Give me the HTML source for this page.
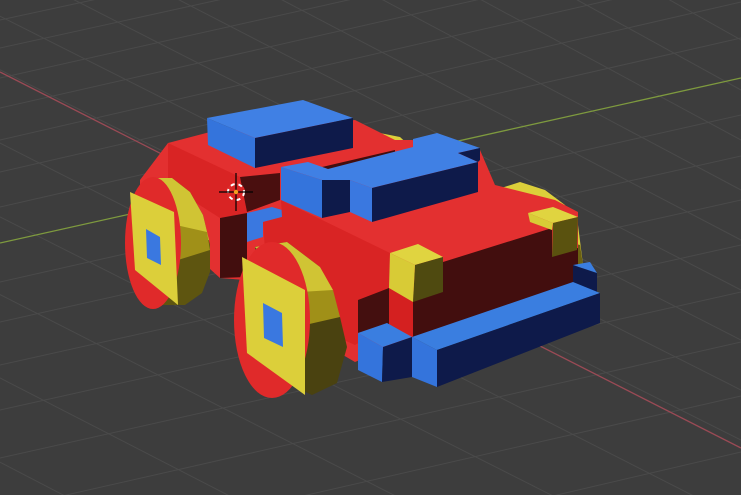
<!DOCTYPE html>
<html><head><meta charset="utf-8"><style>
html,body{margin:0;padding:0;background:#3d3d3d;width:741px;height:495px;overflow:hidden}
svg{display:block;overflow:hidden}
</style></head><body>
<svg width="741" height="495" viewBox="0 0 741 495" xmlns="http://www.w3.org/2000/svg">
<rect width="741" height="495" fill="#3d3d3d"/>
<g stroke="#4a4a4a" stroke-width="1" fill="none">
<line x1="0" y1="20" x2="741" y2="-140"/>
<line x1="0" y1="48" x2="741" y2="-115"/>
<line x1="0" y1="78" x2="741" y2="-88"/>
<line x1="0" y1="108" x2="741" y2="-60"/>
<line x1="0" y1="140" x2="741" y2="-30"/>
<line x1="0" y1="172" x2="741" y2="2"/>
<line x1="0" y1="207" x2="741" y2="38"/>
<line x1="0" y1="282" x2="741" y2="115"/>
<line x1="0" y1="322" x2="741" y2="156"/>
<line x1="0" y1="365" x2="741" y2="200"/>
<line x1="0" y1="410" x2="741" y2="245"/>
<line x1="0" y1="458" x2="741" y2="292"/>
<line x1="0" y1="510" x2="741" y2="342"/>
<line x1="0" y1="565" x2="741" y2="396"/>
<line x1="0" y1="625" x2="741" y2="452"/>
<line x1="0" y1="690" x2="741" y2="512"/>
<line x1="-300" y1="-80" x2="741" y2="440"/>
<line x1="-250" y1="-110" x2="741" y2="390"/>
<line x1="-200" y1="-140" x2="741" y2="340"/>
<line x1="-150" y1="-170" x2="741" y2="290"/>
<line x1="-100" y1="-200" x2="741" y2="240"/>
<line x1="-50" y1="-230" x2="741" y2="190"/>
<line x1="0" y1="-260" x2="741" y2="140"/>
<line x1="50" y1="-290" x2="741" y2="90"/>
<line x1="100" y1="-320" x2="741" y2="40"/>
<line x1="-360" y1="-40" x2="741" y2="520"/>
<line x1="-430" y1="0" x2="680" y2="560"/>
<line x1="-500" y1="40" x2="600" y2="600"/>
<line x1="-580" y1="80" x2="510" y2="640"/>
<line x1="-660" y1="120" x2="420" y2="680"/>
<line x1="-750" y1="160" x2="320" y2="720"/>
<line x1="-850" y1="200" x2="200" y2="760"/>
</g>
<line x1="0" y1="72" x2="741" y2="448" stroke="#9a4a55" stroke-width="1.3"/>
<line x1="0" y1="243" x2="741" y2="78" stroke="#7e9a3e" stroke-width="1.3"/>

<polygon points="495,190 520,182 545,190 565,205 578,225 583,265 578,292 560,295 540,240" fill="#dccf3a"/>
<polygon points="560,240 580,245 583,265 578,292 560,295" fill="#6a6012"/>
<polygon points="362,137 380,133 400,137 412,148 397,153 370,150" fill="#dccf3a"/>

<polygon points="140,180 168,143 210,132 355,120 395,140 412,140 480,150 495,185 555,200 578,212 578,285 412,338 355,362 300,330 245,280 220,278 200,260 140,230" fill="#e33030"/>
<polygon points="168,143 240,177 247,213 220,218 168,185" fill="#d92424"/>
<polygon points="240,177 280,173 280,200 247,212" fill="#4a0f0f"/>
<polygon points="220,218 247,213 247,277 220,278" fill="#420e0e"/>
<polygon points="322,167 395,150 395,155 330,170" fill="#420e0e"/>
<polygon points="247,213 272,207 282,210 282,217 263,222 263,237 253,240 247,242" fill="#3a78e0"/>
<polygon points="281,200 390,253 389,325 355,345 300,320 265,250 263,222 282,217" fill="#d92424"/>
<polygon points="412,295 443,262 552,228 552,255 578,248 578,285 412,338" fill="#420e0e"/>
<polygon points="389,288 413,302 413,337 389,325" fill="#d42020"/>
<polygon points="358,300 389,288 389,325 358,333" fill="#440f0f"/>
<polygon points="390,253 418,244 443,257 415,265" fill="#e0d440"/>
<polygon points="415,265 443,257 443,292 413,302" fill="#4f4a10"/>
<polygon points="390,253 415,265 413,302 389,288" fill="#d8cb36"/>
<polygon points="528,213 553,207 578,217 553,223" fill="#e0d440"/>
<polygon points="553,223 578,217 577,250 552,257" fill="#5a520f"/>
<polygon points="528,213 553,223 552,230 530,222" fill="#d8cb36"/>

<polygon points="573,265 597,273 597,293 573,282" fill="#0e1a4a"/>
<polygon points="573,265 590,262 597,273" fill="#3a7ee0"/>
<polygon points="412,337 573,282 600,293 437,350" fill="#3a7ee0"/>
<polygon points="437,350 600,293 600,323 437,387" fill="#0e1a4a"/>
<polygon points="412,337 437,350 437,387 412,377" fill="#3474dc"/>
<polygon points="358,333 387,323 412,337 383,347" fill="#3a7ee0"/>
<polygon points="358,333 383,347 382,382 358,370" fill="#3474dc"/>
<polygon points="383,347 412,337 412,377 382,382" fill="#0e1a4a"/>

<polygon points="207,118 303,100 353,118 255,138" fill="#4080e4"/>
<polygon points="255,138 353,118 353,148 255,168" fill="#0e1a4a"/>
<polygon points="207,118 255,138 255,168 208,145" fill="#3474dc"/>

<polygon points="281,167 308,162 328,169 413,147 413,139 437,133 480,148 458,153 478,162 372,188 350,180 322,180" fill="#4080e4"/>
<polygon points="458,153 480,148 480,160 478,162" fill="#0e1a4a"/>
<polygon points="372,188 478,162 478,192 372,222" fill="#0e1a4a"/>
<polygon points="350,180 372,188 372,222 350,212" fill="#3a78e0"/>
<polygon points="281,167 322,180 322,218 281,200" fill="#3474dc"/>
<polygon points="322,180 350,180 350,212 322,218" fill="#0e1a4a"/>

<polygon points="148,178 172,178 190,192 203,215 210,245 210,272 202,293 185,305 160,305" fill="#5e5510"/>
<polygon points="148,178 172,178 190,192 203,215 209,240 178,250 165,200" fill="#d0c434"/>
<polygon points="176,225 207,232 210,250 178,260" fill="#a09018"/>
<ellipse cx="153" cy="243" rx="28" ry="66" fill="#e02a2a"/>
<polygon points="130,192 174,212 178,305 135,270" fill="#dccf3a"/>
<polygon points="146,229 160,237 161,265 147,258" fill="#3a78e0"/>

<g>
<circle cx="236" cy="192" r="8" fill="none" stroke="#e02a2a" stroke-width="2"/>
<circle cx="236" cy="192" r="8" fill="none" stroke="#fff" stroke-width="2" stroke-dasharray="4 4"/>
<line x1="236" y1="173" x2="236" y2="211" stroke="#000" stroke-width="1.2"/>
<line x1="219" y1="192" x2="253" y2="192" stroke="#000" stroke-width="1.2"/>
<circle cx="236" cy="192" r="2.2" fill="#f0a020"/>
</g>

<polygon points="255,247 287,242 320,267 340,317 347,347 337,383 312,395 280,380" fill="#4a4210"/>
<polygon points="255,247 287,242 320,267 333,290 305,300 275,270" fill="#d0c434"/>
<polygon points="300,292 333,290 340,317 305,325" fill="#a09018"/>
<ellipse cx="272" cy="320" rx="38" ry="78" fill="#e02a2a"/>
<polygon points="242,257 305,290 305,395 247,353" fill="#dccf3a"/>
<polygon points="263,303 282,313 283,347 264,338" fill="#3a78e0"/>
</svg>
</body></html>
